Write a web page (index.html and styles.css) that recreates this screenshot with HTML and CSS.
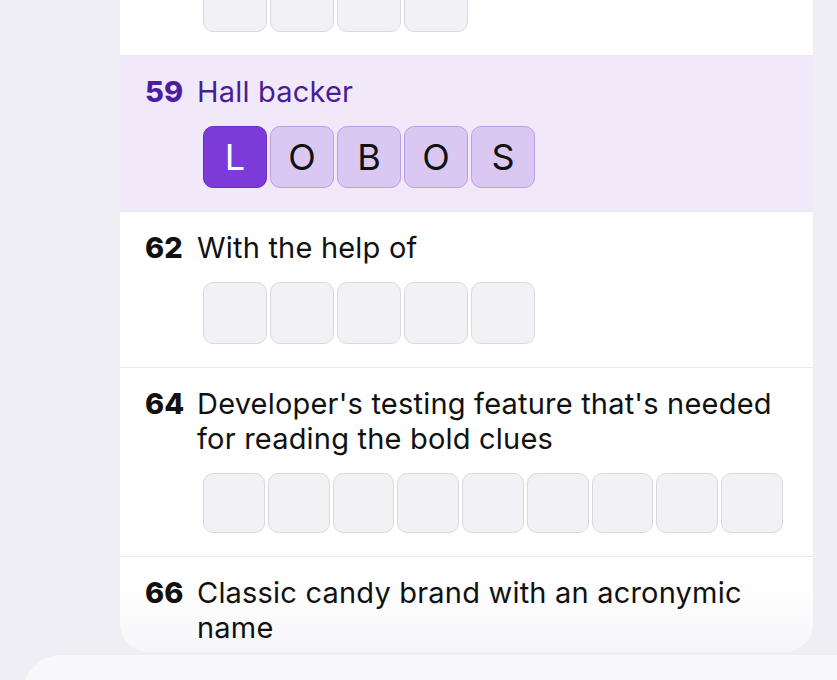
FILE: index.html
```html
<!DOCTYPE html>
<html lang="en">
<head>
  <meta charset="UTF-8">
  <title>Crossword clues</title>
  <meta name="viewport" content="width=device-width, initial-scale=1">
  <link rel="stylesheet" href="styles.css">
</head>
<body>
  <div class="screen">
    <div class="card">

      <!-- tail of the previous clue, scrolled mostly out of view -->
      <div class="clue tail">
        <div class="cells">
          <span class="cell"></span><span class="cell"></span><span class="cell"></span><span class="cell"></span>
        </div>
      </div>

      <div class="clue active">
        <div class="clue-head"><span class="num">59</span><span class="text">Hall backer</span></div>
        <div class="cells">
          <span class="cell current">L</span><span class="cell">O</span><span class="cell">B</span><span class="cell">O</span><span class="cell">S</span>
        </div>
      </div>

      <div class="clue">
        <div class="clue-head"><span class="num">62</span><span class="text">With the help of</span></div>
        <div class="cells">
          <span class="cell"></span><span class="cell"></span><span class="cell"></span><span class="cell"></span><span class="cell"></span>
        </div>
      </div>

      <div class="clue">
        <div class="clue-head"><span class="num">64</span><span class="text">Developer's testing feature that's needed for reading the bold clues</span></div>
        <div class="cells">
          <span class="cell"></span><span class="cell"></span><span class="cell"></span><span class="cell"></span><span class="cell"></span><span class="cell"></span><span class="cell"></span><span class="cell"></span><span class="cell"></span>
        </div>
      </div>

      <div class="clue">
        <div class="clue-head"><span class="num">66</span><span class="text">Classic candy brand with an acronymic name</span></div>
        <div class="cells">
          <span class="cell"></span><span class="cell"></span><span class="cell"></span><span class="cell"></span>
        </div>
      </div>

    </div>
    <div class="sheet"></div>
  </div>
</body>
</html>
```

FILE: styles.css
```css
html, body {
  margin:0;
  padding:0;
}

body {
  background:#efeef5;
  font-family:Inter, "Noto Sans", sans-serif;
  color:#111;
  overflow:hidden;
}

.screen {
  height:680px;
  overflow:hidden;
  padding:0 24px 0 120px;
}

/* clue list card, scrolled so the top is off screen */
.card {
  background:linear-gradient(#fff calc(100% - 70px), #f6f6f9);
  height:682px;
  margin-top:-30px;
  border-radius:0 0 28px 28px;
  overflow:hidden;
}

.clue {
  padding:18px 30px 23px 25px;
  border-bottom:1px solid #e9e9ee;
}

.clue.tail {
  padding-top:0;
}

.clue.tail .cells {
  margin-top:0;
}

.clue-head {
  display:flex;
  font-size:29px;
  line-height:35px;
  letter-spacing:0.2px;
}

.num {
  flex:0 0 52px;
  font-weight:800;
  letter-spacing:0;
}

.text {
  flex:1;
}

.cells {
  display:flex;
  gap:3px;
  margin:17px 0 0 58px;
}

.cell {
  flex:0 1 64px;
  min-width:0;
  aspect-ratio:64 / 62;
  box-sizing:border-box;
  background:#f1f1f6;
  border:1.5px solid #d9d9df;
  border-radius:10px;
  display:flex;
  align-items:center;
  justify-content:center;
  font-size:36px;
}

.active {
  background:#f1e9fa;
  color:#4a1d96;
}

.active .num {
  color:#4c1ca3;
}

.active .cell {
  background:#dac8f3;
  border-color:#bb9fe6;
  color:#111;
}

.active .cell.current {
  background:#7c3ad8;
  border-color:#6b2cc4;
  color:#fff;
}

/* bottom sheet peeking up */
.sheet {
  height:60px;
  margin:3px -60px 0 -98px;
  background:#f9f9fb;
  border-radius:40px 0 0 0;
}
```
